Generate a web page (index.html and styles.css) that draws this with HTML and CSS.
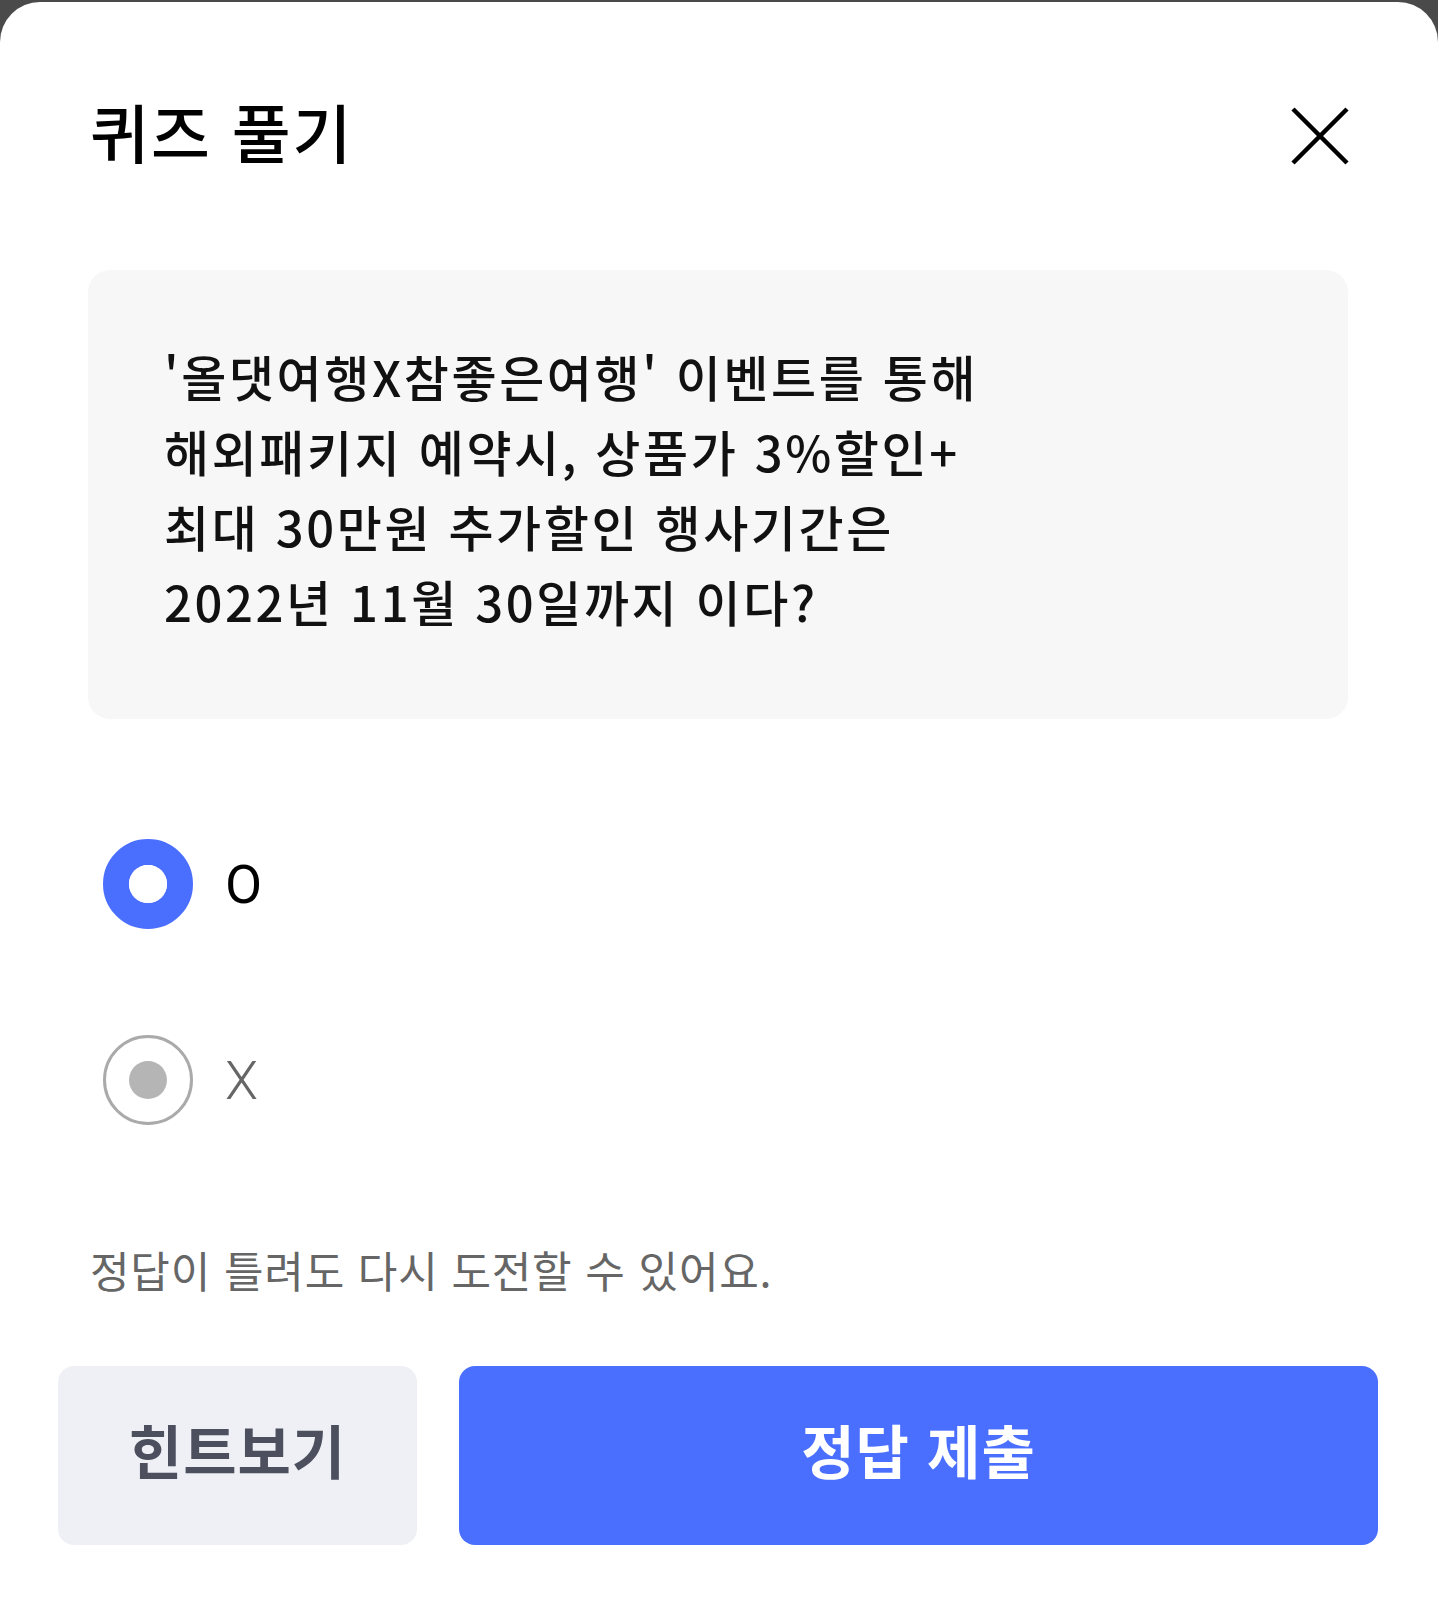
FILE: index.html
```html
<!DOCTYPE html>
<html lang="ko">
<head>
  <meta charset="UTF-8">
  <meta name="viewport" content="width=device-width, initial-scale=1.0">
  <title>퀴즈 풀기</title>
  <link rel="stylesheet" href="styles.css">
</head>
<body>
<div class="sheet">
  <div class="sheet-header">
    <h1>퀴즈 풀기</h1>
    <button class="close-btn" aria-label="닫기">
      <svg width="58" height="58" viewBox="0 0 58 58"><path d="M2 2L56 56M56 2L2 56" stroke="#000" stroke-width="4.5" fill="none"/></svg>
    </button>
  </div>
  <div class="question-box">
    <p>'올댓여행X참좋은여행' 이벤트를 통해<br>해외패키지 예약시, 상품가 3%할인+<br>최대 30만원 추가할인 행사기간은<br>2022년 11월 30일까지 이다?</p>
  </div>
  <div class="options">
    <label class="option checked"><span class="radio"></span><span class="option-text">O</span></label>
    <label class="option"><span class="radio"></span><span class="option-text">X</span></label>
  </div>
  <p class="notice">정답이 틀려도 다시 도전할 수 있어요.</p>
  <div class="actions">
    <button class="btn hint">힌트보기</button>
    <button class="btn submit">정답 제출</button>
  </div>
</div>
</body>
</html>
```

FILE: styles.css
```css
body { margin: 0; background: #4a4a4a; font-family: "Noto Sans CJK KR", "Noto Sans", sans-serif; }
.sheet { margin-top: 2px; background: #fff; border-radius: 40px 40px 0 0; height: 1602px; box-sizing: border-box; padding: 0 60px 0 58px; }
.sheet-header { display: flex; justify-content: space-between; align-items: center; padding: 94px 29px 0 32px; height: 80px; }
.sheet-header h1 { margin: -12px 0 0 0; font-size: 64px; font-weight: 500; color: #000; letter-spacing: 2px; }
.close-btn { border: none; background: none; padding: 0; width: 58px; height: 58px; cursor: pointer; }
.close-btn svg { display: block; }
.question-box { margin: 94px 30px 0 30px; background: #f7f7f7; border-radius: 22px; padding: 68px 60px 78px 76px; height: 449px; box-sizing: border-box; }
.question-box p { margin: 0; font-size: 49px; line-height: 75px; font-weight: 500; color: #111; letter-spacing: 2.6px; }
.options { margin-top: 120px; padding-left: 45px; display: flex; flex-direction: column; gap: 106px; }
.option { display: flex; align-items: center; gap: 32px; height: 90px; }
.radio { width: 90px; height: 90px; border-radius: 50%; box-sizing: border-box; border: 3px solid #aaa; display: flex; align-items: center; justify-content: center; }
.radio::after { content: ""; width: 38px; height: 38px; border-radius: 50%; background: #b5b5b5; }
.option.checked .radio { border: 26px solid #4a6fff; }
.option.checked .radio::after { background: #fff; }
.option-text { font-family: Roboto, "Noto Sans", sans-serif; font-size: 54px; font-weight: 300; color: #666; }
.option.checked .option-text { color: #000; font-weight: 400; }
.notice { margin: 114px 0 0 32px; font-size: 43px; color: #666; letter-spacing: 0.8px; line-height: 60px; }
.actions { display: flex; gap: 42px; margin-top: 67px; }
.btn { border: none; height: 179px; border-radius: 16px; padding: 0 0 14px 0; font-family: inherit; font-size: 58px; font-weight: 700; letter-spacing: 1px; cursor: pointer; }
.hint { width: 359px; background: #eff0f5; color: #4b4f5e; }
.submit { flex: 1; background: #4a6fff; color: #fff; }
```
